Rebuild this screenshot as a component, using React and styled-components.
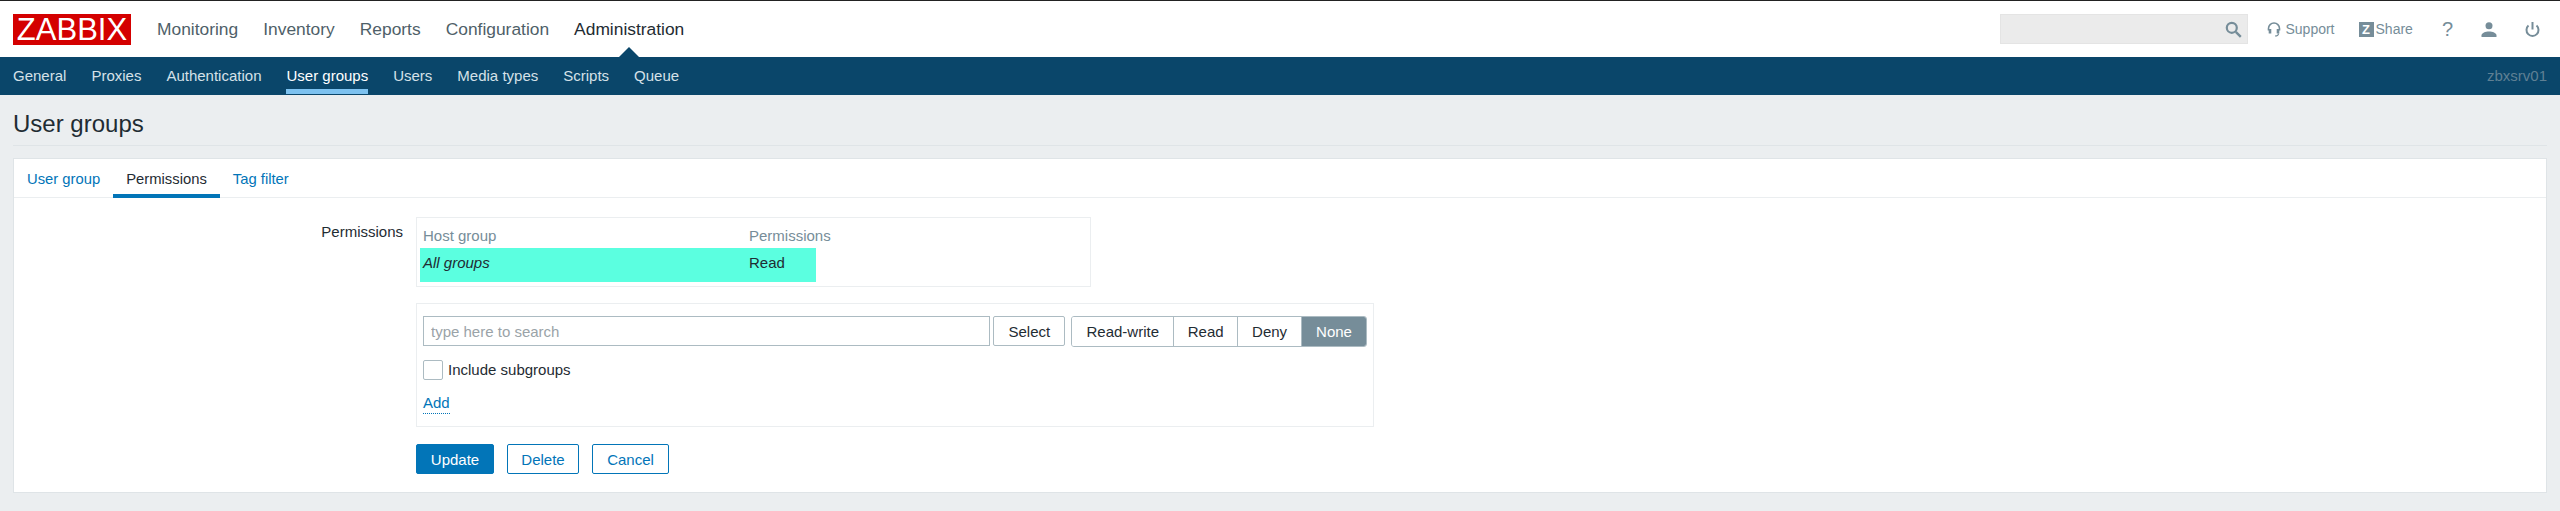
import React from 'react';
import styled, { createGlobalStyle } from 'styled-components';

const GlobalStyle = createGlobalStyle`
	html, body {
		margin: 0;
		background: #ebeef0;
		font-family: 'Liberation Sans', Arial, sans-serif;
		color: #1f2c33;
		overflow: hidden;
	}
	* { box-sizing: border-box; }
`;

const TopBar = styled.header`
	height: 57px;
	background: #fff;
	border-top: 1px solid #222;
	display: flex;
	align-items: center;
	padding: 0 13px;
`;

const Logo = styled.div`
	width: 118px;
	height: 31px;
	background: #d40000;
	color: #fff;
	font-size: 31px;
	line-height: 31px;
	text-align: center;
`;

const MainNav = styled.nav`
	display: flex;
	gap: 25px;
	margin-left: 26px;
`;

const MainLink = styled.a`
	position: relative;
	font-size: 17.4px;
	line-height: 24px;
	color: ${(p) => (p.$active ? '#1f2c33' : '#4f5f69')};

	${(p) => p.$active && `
		&::after {
			content: '';
			position: absolute;
			left: 50%;
			bottom: -16px;
			margin-left: -10px;
			border: 10px solid transparent;
			border-top: 0;
			border-bottom-color: #0a466a;
		}
	`}
`;

const Tools = styled.div`
	margin-left: auto;
	display: flex;
	align-items: center;
	margin-right: 7px;
`;

const SearchBox = styled.div`
	width: 248px;
	height: 30px;
	background: #ebebeb;
	border: 1px solid #e4e4e4;
	display: flex;
	align-items: center;
	justify-content: flex-end;
	padding-right: 5px;
	margin-right: 19px;
`;

const ToolLink = styled.a`
	display: flex;
	align-items: center;
	gap: ${(p) => p.$inner || 0}px;
	font-size: 14px;
	color: #768d99;
	margin-right: ${(p) => p.$gap}px;
`;

const ZBadge = styled.span`
	width: 15px;
	height: 15px;
	background: #768d99;
	color: #fff;
	font-size: 13px;
	font-weight: 700;
	line-height: 15px;
	text-align: center;
`;

const HelpMark = styled.span`
	font-size: 20px;
	line-height: 24px;
	color: #768d99;
`;

const SubNav = styled.nav`
	height: 38px;
	background: #0a466a;
	display: flex;
	align-items: flex-start;
	gap: 25px;
	padding: 0 13px;
`;

const SubLink = styled.a`
	height: 37px;
	padding-top: 10px;
	font-size: 15px;
	line-height: 18px;
	color: ${(p) => (p.$active ? '#fff' : '#d5e1e8')};
	border-bottom: 5px solid ${(p) => (p.$active ? '#7dc2f0' : 'transparent')};
`;

const ServerName = styled.span`
	margin-left: auto;
	padding-top: 10px;
	font-size: 15px;
	line-height: 18px;
	color: #5f8094;
`;

const Title = styled.h1`
	margin: 0 13px;
	height: 51px;
	padding-top: 14px;
	font-size: 24px;
	line-height: 30px;
	font-weight: 400;
	border-bottom: 1px solid #dfe4e7;
`;

const Card = styled.main`
	margin: 12px 13px 0;
	height: 335px;
	background: #fff;
	border: 1px solid #dfe4e7;
`;

const Tabs = styled.div`
	display: flex;
	height: 39px;
	border-bottom: 1px solid #ebeef0;
`;

const Tab = styled.a`
	height: 39px;
	padding: 10px 13px 0;
	font-size: 14.8px;
	line-height: 20px;
	color: ${(p) => (p.$active ? '#1f2c33' : '#0275b8')};
	border-bottom: 4px solid ${(p) => (p.$active ? '#0275b8' : 'transparent')};
`;

const FormRow = styled.div`
	display: grid;
	grid-template-columns: 389px 1fr;
	column-gap: 13px;
	padding-top: 19px;
`;

const FieldLabel = styled.label`
	text-align: right;
	font-size: 15px;
	line-height: 18px;
	padding-top: 6px;
`;

const Fields = styled.div`
	display: flex;
	flex-direction: column;
	align-items: flex-start;
`;

const PermBox = styled.div`
	width: 675px;
	height: 70px;
	border: 1px solid #ebeef0;
	padding: 9px 3px 0;
`;

const PermTable = styled.table`
	table-layout: fixed;
	width: 396px;
	border-collapse: collapse;
	font-size: 15px;
`;

const HeadCell = styled.th`
	width: ${(p) => p.$width}px;
	height: 21px;
	padding: 0 3px;
	font-weight: 400;
	text-align: left;
	vertical-align: top;
	color: #768d99;
	white-space: nowrap;
	overflow: visible;
`;

const BodyCell = styled.td`
	height: 34px;
	padding: 0 3px 6px;
	background: #5bffe0;
	font-style: ${(p) => (p.$italic ? 'italic' : 'normal')};
`;

const AddBox = styled.div`
	width: 958px;
	height: 124px;
	margin-top: 16px;
	border: 1px solid #ebeef0;
	padding: 12px 6px 0;
`;

const SearchRow = styled.div`
	display: flex;
	align-items: flex-start;
`;

const GroupInput = styled.input`
	width: 568px;
	height: 30px;
	border: 1px solid #acbbc2;
	padding: 0 7px;
	font: 15px 'Liberation Sans', Arial, sans-serif;
	outline: none;

	&::placeholder {
		color: #9aa3a8;
		opacity: 1;
	}
`;

const SelectButton = styled.button`
	width: 72px;
	height: 30px;
	margin: 0 6px 0 3px;
	background: #fff;
	border: 1px solid #acbbc2;
	border-radius: 2px;
	font: 15px 'Liberation Sans', Arial, sans-serif;
	color: #1f2c33;
`;

const Segments = styled.div`
	display: flex;
	height: 31px;
	border: 1px solid #acbbc2;
	border-radius: 3px;
	overflow: hidden;
`;

const Segment = styled.span`
	width: ${(p) => p.$width}px;
	font-size: 15px;
	line-height: 29px;
	text-align: center;
	color: ${(p) => (p.$on ? '#fff' : '#1f2c33')};
	background: ${(p) => (p.$on ? '#768d99' : '#fff')};
	border-right: ${(p) => (p.$last ? '0' : '1px solid #acbbc2')};
`;

const CheckRow = styled.label`
	display: flex;
	align-items: center;
	gap: 5px;
	margin-top: 13px;
	font-size: 15px;
	line-height: 20px;
`;

const CheckBox = styled.span`
	width: 20px;
	height: 20px;
	border: 1px solid #acbbc2;
	border-radius: 2px;
	background: #fff;
`;

const AddLink = styled.a`
	display: inline-block;
	margin-top: 13px;
	font-size: 15px;
	line-height: 20px;
	color: #0275b8;
	border-bottom: 1px dotted #0275b8;
`;

const Actions = styled.div`
	display: flex;
	gap: 13px;
	margin-top: 17px;
`;

const ActionButton = styled.button`
	width: ${(p) => p.$width}px;
	height: 30px;
	padding: 0;
	border: 1px solid #0275b8;
	border-radius: 2px;
	font: 15px 'Liberation Sans', Arial, sans-serif;
	color: ${(p) => (p.$primary ? '#fff' : '#0275b8')};
	background: ${(p) => (p.$primary ? '#0275b8' : '#fff')};
`;

// header icons, drawn by hand to match the zabbix sprites
const SearchIcon = () => (
	<svg width="17" height="17" viewBox="0 0 17 17" fill="none" stroke="#768d99">
		<circle cx="6.8" cy="6.8" r="5" strokeWidth="2.2" />
		<path d="M10.8 10.800 L15.800 15.800" strokeWidth="2.4" />
	</svg>
);

const HeadsetIcon = () => (
	<svg width="14" height="15" viewBox="0 0 14 15" fill="none" stroke="#768d99">
		<path d="M1.500 8.500V6.500a5.500 5.500 0 0 1 11 0v2" strokeWidth="1.600" />
		<path d="M3 7v4.500M11 7v4.500" strokeWidth="2.600" />
		<path d="M11.500 11.500c0 1.800-1.500 2.500-3.500 2.500" strokeWidth="1.200" />
	</svg>
);

const UserIcon = () => (
	<svg width="16" height="15" viewBox="0 0 16 15" fill="#768d99">
		<circle cx="8" cy="3.700" r="3.500" />
		<path d="M0.500 15v-1.500c0-2.500 4-4 7.500-4s7.500 1.500 7.500 4V15z" />
	</svg>
);

const PowerIcon = () => (
	<svg width="15" height="15" viewBox="0 0 15 15" fill="none" stroke="#768d99" strokeWidth="2">
		<path d="M3.500 3.500a6 6 0 1 0 8 0" />
		<path d="M7.500 0v7.500" />
	</svg>
);

const mainItems = ['Monitoring', 'Inventory', 'Reports', 'Configuration', 'Administration'];
const subItems = ['General', 'Proxies', 'Authentication', 'User groups', 'Users', 'Media types', 'Scripts', 'Queue'];

function App() {
	return (
		<>
			<GlobalStyle />
			<TopBar>
				<Logo>ZABBIX</Logo>
				<MainNav>
					{mainItems.map((item) => (
						<MainLink key={item} $active={item === 'Administration'}>{item}</MainLink>
					))}
				</MainNav>
				<Tools>
					<SearchBox><SearchIcon /></SearchBox>
					<ToolLink $gap={24} $inner={4}><HeadsetIcon />Support</ToolLink>
					<ToolLink $gap={29} $inner={2}><ZBadge>Z</ZBadge>Share</ToolLink>
					<ToolLink $gap={28}><HelpMark>?</HelpMark></ToolLink>
					<ToolLink $gap={28}><UserIcon /></ToolLink>
					<ToolLink $gap={0}><PowerIcon /></ToolLink>
				</Tools>
			</TopBar>
			<SubNav>
				{subItems.map((item) => (
					<SubLink key={item} $active={item === 'User groups'}>{item}</SubLink>
				))}
				<ServerName>zbxsrv01</ServerName>
			</SubNav>
			<Title>User groups</Title>
			<Card>
				<Tabs>
					<Tab>User group</Tab>
					<Tab $active>Permissions</Tab>
					<Tab>Tag filter</Tab>
				</Tabs>
				<FormRow>
					<FieldLabel>Permissions</FieldLabel>
					<Fields>
						<PermBox>
							<PermTable>
								<thead>
									<tr>
										<HeadCell $width={326}>Host group</HeadCell>
										<HeadCell $width={70}>Permissions</HeadCell>
									</tr>
								</thead>
								<tbody>
									<tr>
										<BodyCell $italic>All groups</BodyCell>
										<BodyCell>Read</BodyCell>
									</tr>
								</tbody>
							</PermTable>
						</PermBox>
						<AddBox>
							<SearchRow>
								<GroupInput placeholder="type here to search" />
								<SelectButton>Select</SelectButton>
								<Segments>
									<Segment $width={102}>Read-write</Segment>
									<Segment $width={64}>Read</Segment>
									<Segment $width={64}>Deny</Segment>
									<Segment $width={64} $on $last>None</Segment>
								</Segments>
							</SearchRow>
							<CheckRow><CheckBox />Include subgroups</CheckRow>
							<AddLink>Add</AddLink>
						</AddBox>
						<Actions>
							<ActionButton $primary $width={78}>Update</ActionButton>
							<ActionButton $width={72}>Delete</ActionButton>
							<ActionButton $width={77}>Cancel</ActionButton>
						</Actions>
					</Fields>
				</FormRow>
			</Card>
		</>
	);
}

export default App;
